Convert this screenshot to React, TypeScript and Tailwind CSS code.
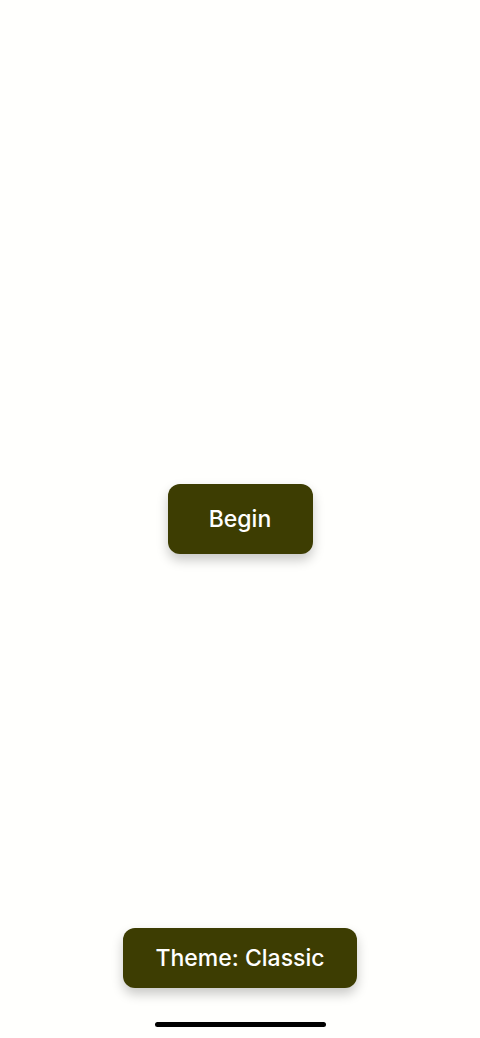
export default function App() {
  return (
    <div className="flex h-[1038px] w-full flex-col items-center bg-[#fffffd] font-['Inter',sans-serif]">
      <div className="flex-1" />
      <button className="h-[70px] w-[145px] rounded-[12px] bg-[#3d3d02] text-[23px] font-medium text-white shadow-[0_6px_12px_rgba(0,0,0,0.22)]">
        Begin
      </button>
      <div className="flex flex-1 flex-col items-center justify-end">
        <button className="h-[60px] w-[234px] rounded-[12px] bg-[#3d3d02] text-[23px] font-medium text-white shadow-[0_6px_12px_rgba(0,0,0,0.22)]">
          Theme: Classic
        </button>
        <div className="mt-[34px] mb-[11px] h-[5px] w-[171px] rounded-full bg-black" />
      </div>
    </div>
  );
}
